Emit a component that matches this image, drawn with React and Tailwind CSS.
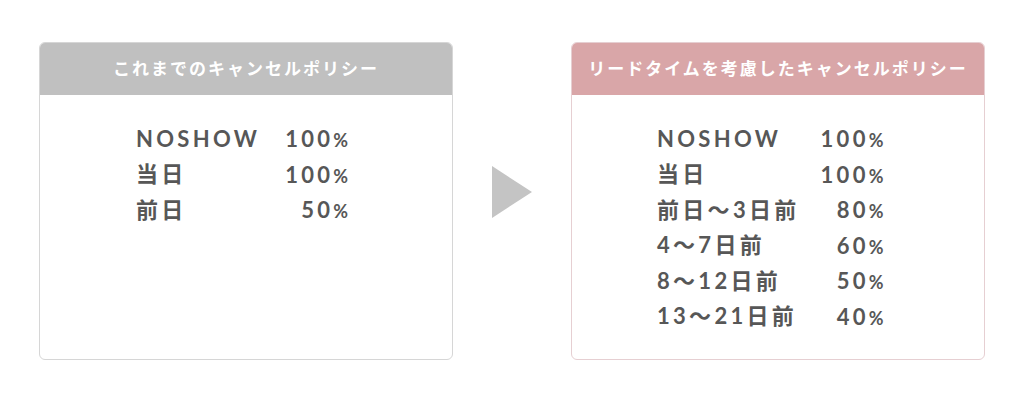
import React from "react";

const font = { fontFamily: 'Lato, "Noto Sans CJK JP", "Noto Sans", sans-serif' };

const before = [
  ["NOSHOW", "100"],
  ["当日", "100"],
  ["前日", "50"],
];

const after = [
  ["NOSHOW", "100"],
  ["当日", "100"],
  ["前日〜3日前", "80"],
  ["4〜7日前", "60"],
  ["8〜12日前", "50"],
  ["13〜21日前", "40"],
];

function PolicyTable({ rows, gap }) {
  return (
    <div className={`inline-grid grid-cols-[auto_auto] ${gap} text-[22px] font-bold tracking-[3.3px] text-[#575757]`}>
      {rows.map(([label, pct]) => (
        <React.Fragment key={label}>
          <div className="h-[35.5px] flex items-center leading-none">{label}</div>
          <div className="h-[35.5px] flex items-baseline justify-end leading-[35.5px]">
            {pct}
            <span className="text-[18px] tracking-normal">%</span>
          </div>
        </React.Fragment>
      ))}
    </div>
  );
}

export default function App() {
  return (
    <div className="w-[1024px] h-[401px] bg-white flex items-start pt-[42px] pl-[39px]" style={font}>
      {/* before */}
      <div className="w-[414px] h-[318px] border border-[#d6d6d6] rounded-[6px] overflow-hidden flex flex-col">
        <div className="h-[52px] bg-[#c0c0c0] flex items-center justify-center text-white text-[17px] font-bold tracking-[2px]">
          これまでのキャンセルポリシー
        </div>
        <div className="pt-[26px] pl-[96px]">
          <PolicyTable rows={before} gap="gap-x-[25px]" />
        </div>
      </div>

      {/* arrow */}
      <div className="w-[118px] flex justify-center pt-[124px]">
        <svg width="40" height="52" viewBox="0 0 40 52">
          <polygon points="0,0 40,26 0,52" fill="#c4c4c4" />
        </svg>
      </div>

      {/* after */}
      <div className="w-[414px] h-[318px] border border-[#e6cfd2] rounded-[6px] overflow-hidden flex flex-col">
        <div className="h-[52px] bg-[#d9a6a8] flex items-center justify-center text-white text-[17px] font-bold tracking-[2px]">
          リードタイムを考慮したキャンセルポリシー
        </div>
        <div className="pt-[26px] pl-[85px]">
          <PolicyTable rows={after} gap="gap-x-[21px]" />
        </div>
      </div>
    </div>
  );
}
